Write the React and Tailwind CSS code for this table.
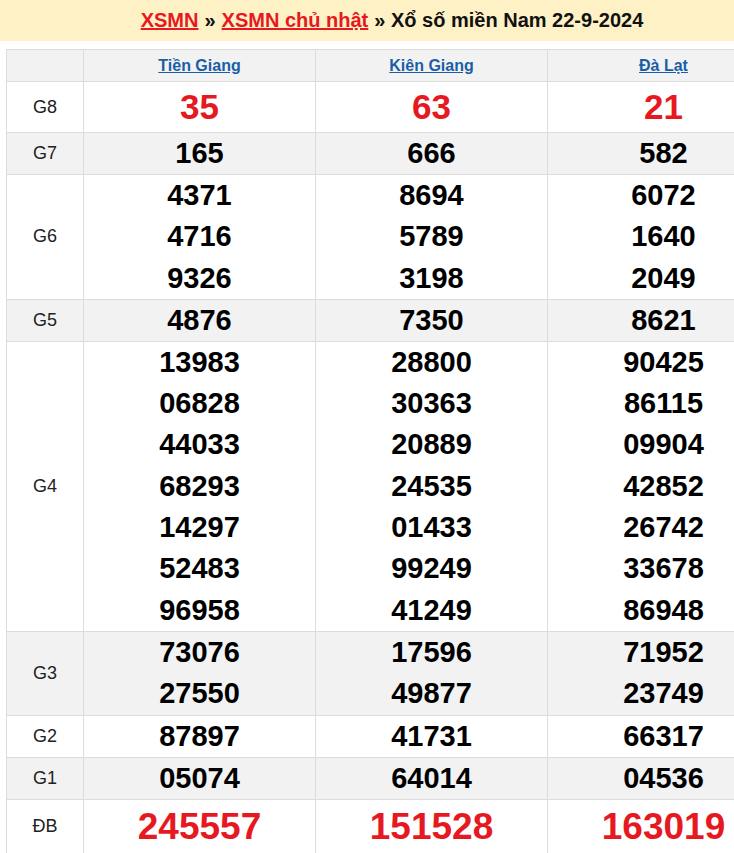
import React from 'react';

const provinces = ['Tiền Giang', 'Kiên Giang', 'Đà Lạt'];

const rows = [
  { label: 'G8', big: true, values: [['35'], ['63'], ['21']] },
  { label: 'G7', values: [['165'], ['666'], ['582']] },
  { label: 'G6', values: [['4371', '4716', '9326'], ['8694', '5789', '3198'], ['6072', '1640', '2049']] },
  { label: 'G5', values: [['4876'], ['7350'], ['8621']] },
  {
    label: 'G4',
    values: [
      ['13983', '06828', '44033', '68293', '14297', '52483', '96958'],
      ['28800', '30363', '20889', '24535', '01433', '99249', '41249'],
      ['90425', '86115', '09904', '42852', '26742', '33678', '86948'],
    ],
  },
  { label: 'G3', values: [['73076', '27550'], ['17596', '49877'], ['71952', '23749']] },
  { label: 'G2', values: [['87897'], ['41731'], ['66317']] },
  { label: 'G1', values: [['05074'], ['64014'], ['04536']] },
  { label: 'ĐB', special: true, values: [['245557'], ['151528'], ['163019']] },
];

export default function App() {
  return (
    <div className="w-[734px] h-[853px] overflow-hidden bg-white font-['Liberation_Sans',Arial,sans-serif]">
      <div className="w-[784px]">
        <div className="h-[41px] bg-[#fdf1c5] flex items-center justify-center text-[20px] font-bold text-[#111] pb-[2px]">
          <a className="text-[#e5191f] underline">XSMN</a>
          <span className="mx-[6px]">»</span>
          <a className="text-[#e5191f] underline">XSMN chủ nhật</a>
          <span className="ml-[6px]">» Xổ số miền Nam 22-9-2024</span>
        </div>
        <div className="pt-[8px] pl-[6px]">
          <table className="border-collapse table-fixed w-[774px]">
            <colgroup>
              <col className="w-[77px]" />
              <col className="w-[232px]" />
              <col className="w-[232px]" />
              <col className="w-[232px]" />
            </colgroup>
            <thead>
              <tr className="bg-[#f2f2f2] h-[32px]">
                <th className="border border-[#dcdcdc]"></th>
                {provinces.map((p) => (
                  <th key={p} className="border border-[#dcdcdc] text-[16px] font-bold text-[#1a5ea8] underline">
                    {p}
                  </th>
                ))}
              </tr>
            </thead>
            <tbody>
              {rows.map((r, i) => (
                <tr key={r.label} className={i % 2 === 1 ? 'bg-[#f2f2f2]' : 'bg-white'}>
                  <td className="border border-[#dcdcdc] text-center text-[18px] text-[#222]">{r.label}</td>
                  {r.values.map((vals, j) => (
                    <td key={j} className="border border-[#dcdcdc] text-center p-0">
                      {vals.map((v) => (
                        <div
                          key={v}
                          className={
                            r.big
                              ? 'text-[35px] leading-[50px] font-bold text-[#e5191f]'
                              : r.special
                              ? 'text-[37px] leading-[54px] font-bold text-[#e5191f]'
                              : vals.length > 1
                              ? 'text-[29px] leading-[41.3px] font-bold text-black'
                              : 'text-[29px] leading-[41px] font-bold text-black'
                          }
                        >
                          {v}
                        </div>
                      ))}
                    </td>
                  ))}
                </tr>
              ))}
            </tbody>
          </table>
        </div>
      </div>
    </div>
  );
}
